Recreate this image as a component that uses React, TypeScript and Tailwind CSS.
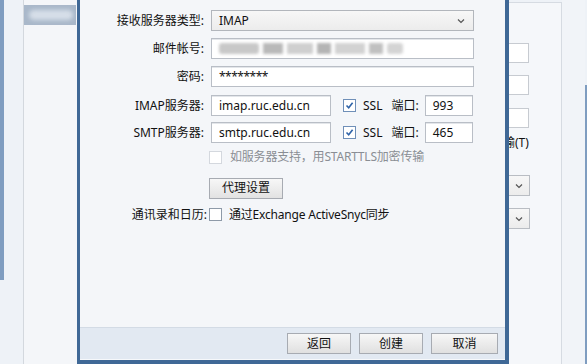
import React from 'react';

const font = { fontFamily: '"Noto Sans", "Noto Sans CJK SC", sans-serif' };

const Check: React.FC<{ checked?: boolean; disabled?: boolean }> = ({ checked, disabled }) => (
  <div
    className={`w-[13px] h-[13px] shrink-0 border bg-white flex items-center justify-center ${
      disabled ? 'border-[#d4d8de]' : checked ? 'border-[#6f8fb8]' : 'border-[#8e9aa8]'
    }`}
  >
    {checked && (
      <svg width="9" height="9" viewBox="0 0 9 9">
        <path d="M1.5 4.5 L3.7 6.8 L7.6 1.8" fill="none" stroke="#2f63a8" strokeWidth="1.6" />
      </svg>
    )}
  </div>
);

const Field: React.FC<{ className?: string; children?: React.ReactNode }> = ({ className = '', children }) => (
  <div
    className={`h-[21px] bg-white border border-[#b9bec6] shadow-[inset_0_1px_0_#e3e6ea] flex items-center px-[7px] text-[12px] text-[#111] ${className}`}
  >
    {children}
  </div>
);

const Label: React.FC<{ children: React.ReactNode }> = ({ children }) => (
  <div className="w-[125px] shrink-0 text-right text-[12px] text-[#111] pr-[1px]">{children}</div>
);

const ServerRow: React.FC<{ label: string; host: string; port: string; className?: string }> = ({
  label,
  host,
  port,
  className = '',
}) => (
  <div className={`flex items-center h-[21px] ${className}`}>
    <Label>{label}</Label>
    <Field className="ml-[6px] w-[120px]">{host}</Field>
    <div className="ml-[12px]">
      <Check checked />
    </div>
    <span className="ml-[7px] text-[12px] text-[#111]">SSL</span>
    <span className="ml-[9px] text-[12px] text-[#111]">端口:</span>
    <Field className="ml-[6px] w-[48px]">{port}</Field>
  </div>
);

const FooterButton: React.FC<{ children: React.ReactNode; className?: string }> = ({ children, className = '' }) => (
  <button
    className={`h-[21px] w-[64px] border border-[#a7abb2] bg-gradient-to-b from-[#f7f7f7] to-[#e0e0e0] text-[12px] text-[#111] ${className}`}
  >
    {children}
  </button>
);

const Chevron = () => (
  <svg width="8" height="6" viewBox="0 0 8 6">
    <path d="M1 1.5 L4 4.5 L7 1.5" fill="none" stroke="#555" strokeWidth="1.2" />
  </svg>
);

export default function App() {
  return (
    <div className="w-[587px] h-[364px] overflow-hidden flex bg-[#eef2f7]" style={font}>
      {/* background window, left part */}
      <div className="w-[77px] shrink-0 flex">
        <div className="w-[4px] h-[280px] bg-[#7f9dc0]" />
        <div className="w-[19px]" />
        <div className="w-[54px] h-full border-l border-[#d3d8de] bg-[#f4f6f9] pt-[5px]">
          <div className="h-[20px] w-[52px] bg-[#a9b8ca] flex items-center pl-[5px]">
            <div className="h-[10px] w-[44px] rounded-full bg-[#d6dee8] blur-[2px]" />
          </div>
        </div>
      </div>

      {/* dialog */}
      <div className="w-[432px] shrink-0 h-full flex flex-col bg-[#f4f6f9] border-l-[3px] border-r-[4px] border-b-[4px] border-[#3f6896]">
        <div className="flex-1 flex flex-col pt-[10px]">
          <div className="flex items-center h-[21px]">
            <Label>接收服务器类型:</Label>
            <div className="ml-[6px] w-[263px] h-[21px] border border-[#b2b6bc] bg-gradient-to-b from-[#f7f7f7] to-[#ececec] flex items-center justify-between px-[7px] text-[12px] text-[#111]">
              <span>IMAP</span>
              <span className="mr-[1px] flex">
                <Chevron />
              </span>
            </div>
          </div>

          <div className="flex items-center h-[21px] mt-[7px]">
            <Label>邮件帐号:</Label>
            <Field className="ml-[6px] w-[263px] gap-[4px]">
              <div className="h-[11px] w-[40px] bg-[#c8c8c8] blur-[1.5px] rounded-[3px]" />
              <div className="h-[11px] w-[20px] bg-[#b9b9b9] blur-[1.5px]" />
              <div className="h-[11px] w-[26px] bg-[#cfcfcf] blur-[1.5px]" />
              <div className="h-[11px] w-[14px] bg-[#b4b4b4] blur-[1.5px]" />
              <div className="h-[11px] w-[30px] bg-[#d2d2d2] blur-[1.5px]" />
              <div className="h-[11px] w-[14px] bg-[#c0c0c0] blur-[1.5px]" />
              <div className="h-[11px] w-[16px] bg-[#d4d4d4] blur-[1.5px] rounded-[3px]" />
            </Field>
          </div>

          <div className="flex items-center h-[21px] mt-[7px]">
            <Label>密码:</Label>
            <Field className="ml-[6px] w-[263px] text-[10px] tracking-[-0.5px]">********</Field>
          </div>

          <ServerRow label="IMAP服务器:" host="imap.ruc.edu.cn" port="993" className="mt-[8px]" />
          <ServerRow label="SMTP服务器:" host="smtp.ruc.edu.cn" port="465" className="mt-[6px]" />

          <div className="flex items-center mt-[7px] h-[14px] pl-[129px] gap-[8px]">
            <Check disabled />
            <span className="text-[12px] text-[#8a8e94] tracking-[-0.2px]">如服务器支持，用STARTTLS加密传输</span>
          </div>

          <div className="mt-[10px] pl-[129px]">
            <button className="h-[21px] w-[74px] border border-[#a7abb2] bg-gradient-to-b from-[#f7f7f7] to-[#e2e2e2] text-[12px] text-[#111]">
              代理设置
            </button>
          </div>

          <div className="flex items-center mt-[9px] h-[14px]">
            <div className="w-[127px] shrink-0 text-right text-[12px] text-[#111]">通讯录和日历:</div>
            <div className="ml-[2px]">
              <Check />
            </div>
            <span className="ml-[7px] text-[12px] text-[#111] tracking-[-0.2px]">通过Exchange ActiveSnyc同步</span>
          </div>
        </div>

        <div className="h-[33px] bg-[#e2e9f2] border-t border-[#d3dbe5] border-b border-b-[#f6f8fb] flex items-center justify-end gap-[8px] pr-[7px]">
          <FooterButton>返回</FooterButton>
          <FooterButton>创建</FooterButton>
          <FooterButton className="w-[67px]">取消</FooterButton>
        </div>
      </div>

      {/* background window, right part */}
      <div className="flex-1 flex">
        <div className="w-[53px] h-full pt-[2px]">
          <div className="h-full border-t border-r border-[#d6dbe2] bg-[#f5f7fa] flex flex-col overflow-hidden">
            <div className="mt-[40px] w-[20px] h-[20px] bg-white border border-l-0 border-[#c7cbd1]" />
            <div className="mt-[12px] w-[20px] h-[20px] bg-white border border-l-0 border-[#c7cbd1]" />
            <div className="mt-[13px] w-[20px] h-[20px] bg-white border border-l-0 border-[#c7cbd1]" />
            <div className="mt-[7px] -ml-[6px] text-[12px] text-[#111] leading-[16px] whitespace-nowrap">输(T)</div>
            <div className="mt-[24px] w-[21px] h-[21px] bg-gradient-to-b from-[#f7f7f7] to-[#ececec] border border-l-0 border-[#b9bdc3] flex items-center justify-center">
              <Chevron />
            </div>
            <div className="mt-[12px] w-[21px] h-[21px] bg-gradient-to-b from-[#f7f7f7] to-[#ececec] border border-l-0 border-[#b9bdc3] flex items-center justify-center">
              <Chevron />
            </div>
          </div>
        </div>
        <div className="flex-1 bg-[#f1f4f8]" />
        <div className="w-[2px] h-full pt-[85px]">
          <div className="h-full bg-[#7f9dc0]" />
        </div>
      </div>
    </div>
  );
}
